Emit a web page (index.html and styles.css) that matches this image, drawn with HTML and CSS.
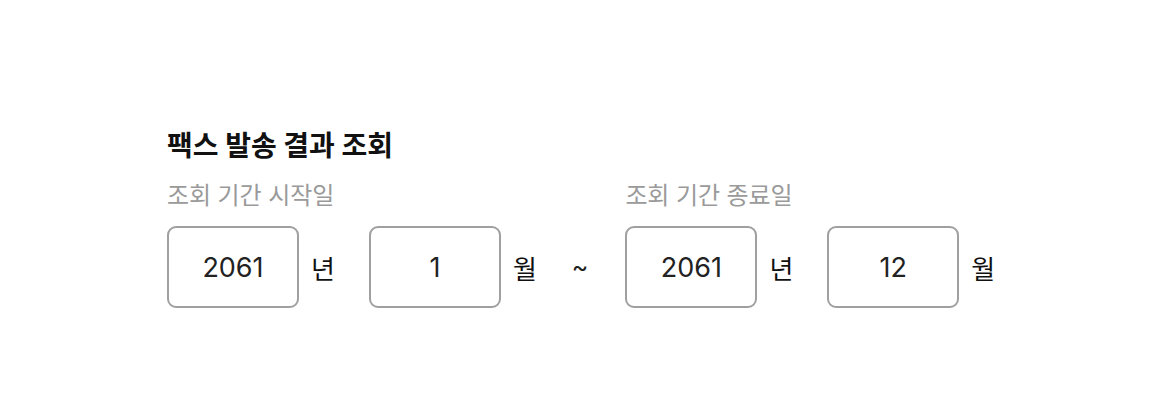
FILE: index.html
```html
<!DOCTYPE html>
<html lang="ko">
<head>
<meta charset="utf-8">
<link rel="stylesheet" href="styles.css">
</head>
<body>
<main class="page">
  <h1 class="title">팩스 발송 결과 조회</h1>
  <div class="range">
    <div class="field">
      <div class="label">조회 기간 시작일</div>
      <div class="inputs">
        <div class="box">2061</div><span class="unit">년</span>
        <div class="box">1</div><span class="unit">월</span>
      </div>
    </div>
    <span class="tilde">~</span>
    <div class="field">
      <div class="label">조회 기간 종료일</div>
      <div class="inputs">
        <div class="box">2061</div><span class="unit">년</span>
        <div class="box">12</div><span class="unit">월</span>
      </div>
    </div>
  </div>
</main>
</body>
</html>
```

FILE: styles.css
```css
html, body {
  margin: 0;
  padding: 0;
  background: #ffffff;
}

.page {
  padding: 126px 0 0 167px;
  font-family: Inter, "Noto Sans CJK KR", sans-serif;
  color: #111111;
}

.title {
  margin: 0;
  font-size: 28px;
  font-weight: 700;
  line-height: 40px;
  letter-spacing: 0;
}

.range {
  display: flex;
  align-items: flex-end;
  margin-top: 13px;
}

.field {
  display: flex;
  flex-direction: column;
  gap: 13px;
}

.label {
  font-size: 24px;
  line-height: 34px;
  color: #9a9a9a;
  letter-spacing: -0.1px;
}

.inputs {
  display: flex;
  align-items: center;
}

.box {
  box-sizing: border-box;
  width: 132px;
  height: 82px;
  border: 2px solid #a0a0a0;
  border-radius: 9px;
  display: flex;
  align-items: center;
  justify-content: center;
  font-size: 27px;
  color: #222222;
}

.unit {
  font-size: 26px;
  margin: 0 34px 0 12px;
  color: #111111;
}

.field:last-child .unit:last-child {
  margin-right: 0;
}

.tilde {
  height: 82px;
  display: flex;
  align-items: center;
  font-size: 25px;
  margin: 0 37px 0 1px;
  color: #222222;
}
```
